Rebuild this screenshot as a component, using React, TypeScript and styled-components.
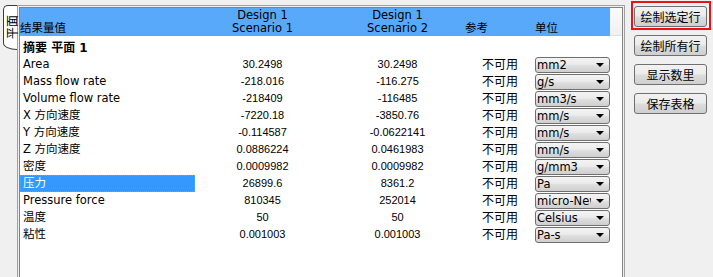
import styled, { createGlobalStyle, css } from "styled-components"

const GlobalStyle = createGlobalStyle`
  html, body {
    margin: 0;
    padding: 0;
    background: #f0f0f0;
  }
  body {
    font-family: "DejaVu Sans", "Noto Sans CJK SC", sans-serif;
    font-size: 11.5px;
    color: #000;
  }
`

const Window = styled.div`
  display: flex;
  width: 713px;
  height: 277px;
  overflow: hidden;
  background: #f0f0f0;
`

const TabRail = styled.div`
  flex: none;
  width: 17px;
  padding-top: 5px;
  box-sizing: border-box;
`

const SideTab = styled.div`
  margin-left: 3px;
  width: 15px;
  height: 45px;
  box-sizing: border-box;
  background: #fff;
  border: 1px solid #3c3c3c;
  border-right: none;
  border-radius: 5px 0 0 14px / 5px 0 0 7px;
  display: flex;
  align-items: center;
  justify-content: center;
  span {
    writing-mode: vertical-rl;
    text-orientation: sideways;
    transform: rotate(180deg);
    font-family: "Noto Sans CJK SC", sans-serif;
    font-size: 12px;
    line-height: 13px;
  }
`

const Frame = styled.div`
  flex: none;
  display: flex;
  width: 608px;
  margin-top: 5px;
  padding: 1px 1px 0;
  box-sizing: border-box;
  border: 1px solid #a0a0a0;
  border-bottom: none;
  background: #f0f0f0;
`

const Sheet = styled.div`
  flex: 1;
  border: 1px solid #828282;
  border-bottom: none;
  background: #fff;
`

const COLS = "175px 135px 135px 70px 75px 12px"

const HeaderRow = styled.div`
  display: grid;
  grid-template-columns: ${COLS};
  height: 28px;
`

const HeadCell = styled.div<{ $align?: "left" | "center" }>`
  display: flex;
  flex-direction: column;
  justify-content: flex-end;
  align-items: ${(p) => (p.$align === "center" ? "center" : "flex-start")};
  padding-bottom: 1px;
  background: #58a9fa;
  line-height: 13px;
  font-size: 11.5px;
  white-space: nowrap;
`

const HeadFiller = styled.div`
  background: linear-gradient(#fbfbfb, #f0f0f0);
  border-bottom: 1px solid #e2e2e2;
`

const SummaryRow = styled.div`
  height: 20px;
  box-sizing: border-box;
  padding: 0 0 1px 3px;
  display: flex;
  align-items: flex-end;
  font-weight: bold;
  font-size: 12px;
  line-height: 14px;
`

const Row = styled.div`
  display: grid;
  grid-template-columns: ${COLS};
  height: 17px;
`

const Label = styled.div<{ $selected?: boolean }>`
  box-sizing: border-box;
  padding-left: 3px;
  line-height: 17px;
  white-space: nowrap;
  ${(p) =>
    p.$selected &&
    css`
      background: #3399ff;
      color: #fff;
      border: 1px dotted #d88a3c;
      padding-left: 2px;
      line-height: 15px;
    `}
`

const Value = styled.div`
  text-align: center;
  font-family: "Liberation Sans", Arial, sans-serif;
  font-size: 11px;
  line-height: 17px;
`

const RefCell = styled.div`
  text-align: center;
  font-family: "Noto Sans CJK SC", sans-serif;
  font-size: 12px;
  line-height: 15px;
`

const Dropdown = styled.div`
  display: flex;
  align-items: center;
  height: 16px;
  margin-top: 1px;
  box-sizing: border-box;
  border: 1px solid #6f6f6f;
  border-radius: 3px;
  background: linear-gradient(#f4f4f4 0%, #ebebeb 45%, #dedede 55%, #cfcfcf 100%);
  overflow: hidden;
`

const DropText = styled.span`
  flex: 1;
  min-width: 0;
  overflow: hidden;
  white-space: nowrap;
  padding-left: 1px;
  line-height: 15px;
  font-size: 11.5px;
`

const DropArrow = styled.span`
  flex: none;
  width: 18px;
  display: flex;
  justify-content: center;
  &::after {
    content: "";
    border-left: 4px solid transparent;
    border-right: 4px solid transparent;
    border-top: 4px solid #000;
  }
`

const ButtonColumn = styled.div`
  display: flex;
  flex-direction: column;
  align-items: flex-start;
  gap: 8px;
  margin-left: 9px;
  padding-top: 6px;
`

const FocusRing = styled.div`
  margin: -5px -4px -3px -3px;
  padding: 3px 2px 1px 1px;
  border: 2px solid #ee1111;
`

const ActionButton = styled.button`
  display: block;
  width: 73px;
  height: 21px;
  padding: 0;
  box-sizing: border-box;
  border: 1px solid #707070;
  border-radius: 3px;
  background: linear-gradient(#f2f2f2 0%, #ebebeb 48%, #dddddd 52%, #cfcfcf 100%);
  font-family: "Noto Sans CJK SC", sans-serif;
  font-size: 12px;
  line-height: 19px;
  color: #000;
`

type Item = { label: string; s1: string; s2: string; unit: string; selected?: boolean }

const items: Item[] = [
  { label: "Area", s1: "30.2498", s2: "30.2498", unit: "mm2" },
  { label: "Mass flow rate", s1: "-218.016", s2: "-116.275", unit: "g/s" },
  { label: "Volume flow rate", s1: "-218409", s2: "-116485", unit: "mm3/s" },
  { label: "X 方向速度", s1: "-7220.18", s2: "-3850.76", unit: "mm/s" },
  { label: "Y 方向速度", s1: "-0.114587", s2: "-0.0622141", unit: "mm/s" },
  { label: "Z 方向速度", s1: "0.0886224", s2: "0.0461983", unit: "mm/s" },
  { label: "密度", s1: "0.0009982", s2: "0.0009982", unit: "g/mm3" },
  { label: "压力", s1: "26899.6", s2: "8361.2", unit: "Pa", selected: true },
  { label: "Pressure force", s1: "810345", s2: "252014", unit: "micro-Newton" },
  { label: "温度", s1: "50", s2: "50", unit: "Celsius" },
  { label: "粘性", s1: "0.001003", s2: "0.001003", unit: "Pa-s" },
]

export default function App() {
  return (
    <>
      <GlobalStyle />
      <Window>
        <TabRail>
          <SideTab>
            <span>平面</span>
          </SideTab>
        </TabRail>
        <Frame>
          <Sheet>
            <HeaderRow>
              <HeadCell>结果量值</HeadCell>
              <HeadCell $align="center">
                <span>Design 1</span>
                <span>Scenario 1</span>
              </HeadCell>
              <HeadCell $align="center">
                <span>Design 1</span>
                <span>Scenario 2</span>
              </HeadCell>
              <HeadCell>参考</HeadCell>
              <HeadCell>单位</HeadCell>
              <HeadFiller />
            </HeaderRow>
            <SummaryRow>摘要 平面 1</SummaryRow>
            {items.map((it) => (
              <Row key={it.label}>
                <Label $selected={it.selected}>{it.label}</Label>
                <Value>{it.s1}</Value>
                <Value>{it.s2}</Value>
                <RefCell>不可用</RefCell>
                <Dropdown>
                  <DropText>{it.unit}</DropText>
                  <DropArrow />
                </Dropdown>
              </Row>
            ))}
          </Sheet>
        </Frame>
        <ButtonColumn>
          <FocusRing>
            <ActionButton>绘制选定行</ActionButton>
          </FocusRing>
          <ActionButton>绘制所有行</ActionButton>
          <ActionButton>显示数里</ActionButton>
          <ActionButton>保存表格</ActionButton>
        </ButtonColumn>
      </Window>
    </>
  )
}
